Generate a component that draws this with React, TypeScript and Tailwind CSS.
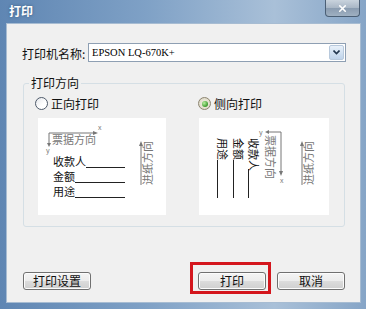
import { X } from "lucide-react";

function FeedArrow() {
  return (
    <g>
      <line x1="103" y1="27" x2="103" y2="67" stroke="#777" strokeWidth="1" />
      <polygon points="103,23 101,28 105,28" fill="#777" />
      <text x="0" y="0" transform="translate(114,67) rotate(-90)" fontSize="11" fill="#777">
        进纸方向
      </text>
    </g>
  );
}

function PortraitPreview() {
  return (
    <svg width="128" height="97" viewBox="0 0 128 97" className="block">
      <line x1="11" y1="15" x2="56" y2="15" stroke="#777" />
      <polygon points="60,15 55,13 55,17" fill="#777" />
      <text x="60" y="12" fontSize="7" fill="#777">x</text>
      <line x1="11" y1="15" x2="11" y2="26" stroke="#777" />
      <polygon points="11,29 9,25 13,25" fill="#777" />
      <text x="8" y="35" fontSize="7" fill="#777">y</text>
      <text x="14" y="26" fontSize="11" fill="#777">票据方向</text>

      <text x="15" y="48" fontSize="11" fill="#111">收款人</text>
      <line x1="48" y1="49.5" x2="87" y2="49.5" stroke="#222" />
      <text x="15" y="63" fontSize="11" fill="#111">金额</text>
      <line x1="37" y1="64.5" x2="87" y2="64.5" stroke="#222" />
      <text x="15" y="78" fontSize="11" fill="#111">用途</text>
      <line x1="37" y1="79.5" x2="87" y2="79.5" stroke="#222" />

      <FeedArrow />
    </svg>
  );
}

function LandscapePreview() {
  return (
    <svg width="130" height="97" viewBox="0 0 130 97" className="block">
      <text x="0" y="0" transform="translate(19,20) rotate(90)" fontSize="11" fill="#111">用途</text>
      <line x1="18.5" y1="42" x2="18.5" y2="80" stroke="#222" />
      <text x="0" y="0" transform="translate(35,20) rotate(90)" fontSize="11" fill="#111">金额</text>
      <line x1="34.5" y1="42" x2="34.5" y2="80" stroke="#222" />
      <text x="0" y="0" transform="translate(50,20) rotate(90)" fontSize="11" fill="#111">收款人</text>
      <line x1="49.5" y1="51" x2="49.5" y2="80" stroke="#222" />

      <text x="0" y="0" transform="translate(67,17) rotate(90)" fontSize="11" fill="#777">票据方向</text>
      <line x1="69" y1="14" x2="82" y2="14" stroke="#777" />
      <polygon points="66,14 70,12 70,16" fill="#777" />
      <text x="60" y="17" fontSize="7" fill="#777">y</text>
      <line x1="82" y1="14" x2="82" y2="54" stroke="#777" />
      <polygon points="82,58 80,53 84,53" fill="#777" />
      <text x="81" y="65" fontSize="7" fill="#777">x</text>

      <FeedArrow />
    </svg>
  );
}

function Radio({ checked, label }: { checked?: boolean; label: string }) {
  return (
    <div className="flex items-center gap-[3px] h-[13px]">
      {checked ? (
        <span className="w-[13px] h-[13px] rounded-full border border-[#8c8470] bg-[radial-gradient(circle,#f4f2e8_0%,#d8d2bd_100%)] flex items-center justify-center">
          <span className="w-[6px] h-[6px] rounded-full bg-[radial-gradient(circle_at_35%_35%,#b8f0a0_0%,#3c9a2c_70%,#2a7a1e_100%)]" />
        </span>
      ) : (
        <span className="w-[13px] h-[13px] rounded-full border border-[#4e5a6a] bg-[linear-gradient(135deg,#e4e6ea_0%,#ffffff_60%)]" />
      )}
      <span className="text-[12px] leading-[13px] text-[#111]">{label}</span>
    </div>
  );
}

function Button({ label }: { label: string }) {
  return (
    <button className="w-[68px] h-[18px] rounded-[3px] border border-[#707070] bg-[linear-gradient(#f4f4f4_0%,#ececec_50%,#dcdcdc_52%,#cfcfcf_100%)] text-[12px] leading-[16px] text-[#111] shadow-[inset_0_0_0_1px_#fcfcfc]">
      {label}
    </button>
  );
}

export default function App() {
  return (
    <div className="w-[366px] h-[309px] flex flex-col bg-[linear-gradient(90deg,#5f86b3_0%,#7fa1c6_40%,#a9c0d8_75%,#86a5c7_100%)] font-['Noto_Sans_CJK_SC',sans-serif] overflow-hidden">
      {/* title bar */}
      <div className="h-[24px] flex items-start shrink-0">
        <span className="pl-[9px] pt-[4px] text-[12px] leading-[14px] font-bold text-white [text-shadow:0_0_3px_#35597f]">
          打印
        </span>
        <div className="ml-auto mr-[6px] w-[35px] h-[17px] rounded-b-[4px] border border-t-0 border-[#4b5f75] bg-[linear-gradient(#c9d3dd_0%,#a8b6c5_50%,#8a9cb0_52%,#9fb0c2_100%)] flex items-center justify-center">
          <X size={11} strokeWidth={3.5} color="#ffffff" />
        </div>
      </div>

      {/* client */}
      <div className="flex-1 ml-[7px] mr-[6px] mb-[7px] bg-[#f0f0f0] shadow-[0_0_0_1px_#a7bcd2] flex flex-col pt-[19px]">
        <div className="flex items-center h-[19px] pl-[15px] pr-[14px]">
          <span className="w-[66px] text-[12px] leading-[14px] pt-[3px] text-[#111]">打印机名称:</span>
          <div className="flex-1 h-full flex items-center border border-[#8e9fb3] bg-white">
            <span className="flex-1 pl-[3px] text-[10.5px] leading-[14px] font-['Liberation_Serif',serif] text-black">
              EPSON LQ-670K+
            </span>
            <div className="w-[15px] h-[15px] mr-[1px] rounded-[2px] border border-[#b8c9dc] bg-[linear-gradient(#e9f1fa_0%,#d3e2f2_50%,#bfd3ea_100%)] flex items-center justify-center">
              <svg width="7" height="5" viewBox="0 0 7 5">
                <path d="M0.5 0.5 L3.5 3.5 L6.5 0.5" fill="none" stroke="#22364e" strokeWidth="1.6" />
              </svg>
            </div>
          </div>
        </div>

        <div className="relative mt-[21px] ml-[16px] mr-[15px] h-[144px] border border-[#d5dfe5] rounded-[3px] flex">
          <span className="absolute left-[5px] top-[-8px] px-[2px] bg-[#f0f0f0] text-[12px] leading-[14px] text-[#111]">
            打印方向
          </span>
          <div className="w-[174px] pl-[11px] pt-[13px] flex flex-col">
            <Radio label="正向打印" />
            <div className="mt-[8px] ml-[3px] w-[128px] h-[97px] bg-white">
              <PortraitPreview />
            </div>
          </div>
          <div className="pt-[13px] flex flex-col">
            <Radio checked label="侧向打印" />
            <div className="mt-[8px] ml-[1px] w-[130px] h-[97px] bg-white">
              <LandscapePreview />
            </div>
          </div>
        </div>

        <div className="mt-[35px] flex items-start pl-[16px] pr-[15px]">
          <div className="mt-[5px]">
            <Button label="打印设置" />
          </div>
          <div className="ml-auto border-[3px] border-[#d4161d] pl-[5px] pr-[2px] pt-[2px]">
            <Button label="打印" />
          </div>
          <div className="ml-[6px] mt-[5px]">
            <Button label="取消" />
          </div>
        </div>
      </div>
    </div>
  );
}
